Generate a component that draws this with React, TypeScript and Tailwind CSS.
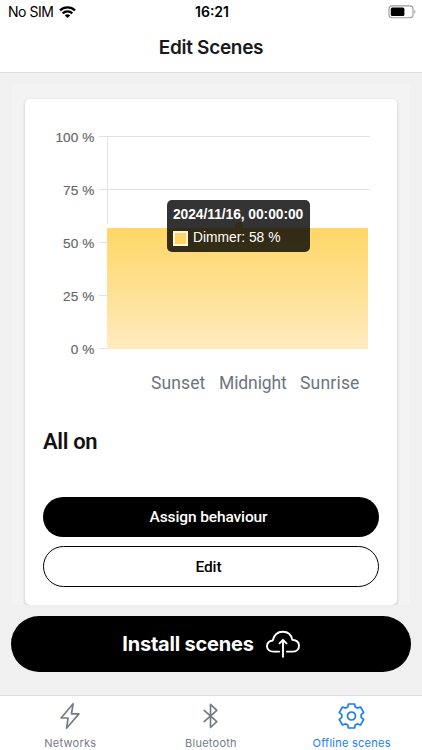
import type { ReactNode } from "react";

const gridLines = [
  { label: "100 %", y: 17, end: 345 },
  { label: "75 %", y: 70, end: 345 },
  { label: "50 %", y: 123, end: 343 },
  { label: "25 %", y: 176, end: 343 },
  { label: "0 %", y: 229, end: 343 },
];

const BoltIcon = () => (
  <svg width="28" height="28" viewBox="0 0 28 28" fill="none" stroke="currentColor" strokeWidth="1.7" strokeLinejoin="round">
    <path d="M17.1 1.8 5.1 16h7l-1.5 10.2L22.9 11.9h-7.4z" />
  </svg>
);

const BluetoothIcon = () => (
  <svg width="28" height="28" viewBox="0 0 28 28" fill="none" stroke="currentColor" strokeWidth="1.7" strokeLinecap="round" strokeLinejoin="round">
    <path d="m7.2 8.3 12.6 11.3-6.3 5.9V2.3l6.3 6L7.2 19.6" />
  </svg>
);

const GearIcon = () => (
  <svg width="28" height="28" viewBox="-13.500 -14 28 28" fill="none" stroke="currentColor" strokeWidth="1.7" strokeLinejoin="round">
    <path d="M-3.1-12H3.1L3.7-9.1 5.8-7.9 9-9 12.2-3.600 9.700-1.300V1.300L12.200 3.600 9 9 5.800 7.900 3.700 9.100 3.100 12H-3.100L-3.700 9.100-5.800 7.900-9 9-12.200 3.600-9.700 1.300V-1.300L-12.200-3.600-9-9-5.800-7.900-3.700-9.100z" />
    <circle r="4" />
  </svg>
);

const CloudUploadIcon = () => (
  <svg width="34" height="28" viewBox="0 0 34 28" fill="none" stroke="currentColor" strokeWidth="1.9" strokeLinecap="round" strokeLinejoin="round">
    <path d="M13.2 21.6H7.4C3.5 21.6 1 19.4 1 16.2c0-3.1 2.3-5.2 5.7-5.7C8 4.8 11.6 1.7 16.8 1.7c5 0 8.5 3 9.4 8 4.2.3 6.8 2.6 6.8 6 0 3.5-2.6 5.9-6.5 5.9h-5.7" />
    <path d="M17 26.7V10M13.5 13.3 17 9.8l3.5 3.5" />
  </svg>
);

const StatusBar = () => (
  <div className="flex h-6 items-center text-[14px] leading-none text-black">
    <div className="flex flex-1 items-center gap-[5px] pl-2">
      <span className="tracking-[-0.45px]">No SIM</span>
      <svg width="17" height="12" viewBox="0 0 17 12" fill="none" stroke="#000" strokeWidth="2.3">
        <path d="M1 4.4C5 .4 12 .4 16 4.4" />
        <path d="M3.7 7.4c2.6-2.6 7-2.6 9.6 0" />
        <path d="M8.5 12 5.8 9.4c1.4-1.4 4-1.4 5.4 0z" fill="#000" stroke="none" />
      </svg>
    </div>
    <span className="font-semibold">16:21</span>
    <div className="flex flex-1 justify-end pr-[6px]">
      <svg width="28" height="14" viewBox="0 0 28 14">
        <rect x="1" y=".9" width="24" height="11.8" rx="3" fill="none" stroke="#9b9b9b" strokeWidth="1.1" />
        <rect x="2.8" y="2.6" width="13.6" height="8.4" rx="1.6" fill="#000" />
        <path d="M26.3 4.8c1.5.6 1.5 3.4 0 4z" fill="#9b9b9b" />
      </svg>
    </div>
  </div>
);

const DimmerChart = () => (
  <div className="relative h-[240px]">
    <svg width="372" height="240" viewBox="0 0 372 240">
      <defs>
        <linearGradient id="dimmer" x1="0" x2="0" y1="0" y2="1">
          <stop offset="0" stopColor="#ffd666" />
          <stop offset="1" stopColor="#ffebbf" />
        </linearGradient>
      </defs>
      {gridLines.map((line) => (
        <g key={line.label}>
          <path d={`M74 ${line.y - 0.5}H${line.end}`} stroke="#e2e2e2" />
          <text
            x="69.5"
            y={line.y + 4.5}
            textAnchor="end"
            fontSize="13.6"
            fontFamily="Liberation Sans, sans-serif"
            fill="#666"
            stroke="#666"
            strokeWidth=".15"
            letterSpacing=".1"
          >
            {line.label}
          </text>
        </g>
      ))}
      <path d="M82.5 17v87" stroke="#e2e2e2" />
      <rect x="82" y="108" width="261" height="121" fill="url(#dimmer)" />
      <circle cx="214" cy="106" r="4" fill="#ffd666" />
    </svg>
    <div className="absolute left-[142px] top-[80px] flex h-[52px] w-[143px] flex-col gap-[7px] rounded-[5px] bg-black/80 pt-[7px] pl-[6px] font-['Liberation_Sans',sans-serif] text-[13.8px] leading-4 whitespace-nowrap text-white">
      <div className="font-bold tracking-[-0.05px]">2024/11/16, 00:00:00</div>
      <div className="flex items-center gap-[5px]">
        <span className="size-[15px] border-2 border-[#fff7df] bg-[#ffd666]" />
        Dimmer: 58 %
      </div>
    </div>
  </div>
);

type TabProps = {
  icon: ReactNode;
  label: string;
  active?: boolean;
};

const Tab = ({ icon, label, active }: TabProps) => (
  <button
    type="button"
    className={`flex w-1/3 flex-col items-center gap-[5px] pt-[6px] text-[11px] leading-4 tracking-[0.25px] ${
      active ? "text-[#1680f5]" : "text-[#747c86]"
    }`}
  >
    {icon}
    <span>{label}</span>
  </button>
);

const App = () => {
  return (
    <div className="flex h-[750px] w-[422px] flex-col overflow-hidden bg-[#f0f0f0] font-['Inter',sans-serif]">
      <header className="h-[73px] shrink-0 border-b border-[#dedede] bg-white">
        <StatusBar />
        <h1 className="mt-[9px] text-center text-[19px] leading-[30px] font-semibold tracking-[-0.3px] text-[#17191c]">
          Edit Scenes
        </h1>
      </header>

      <main className="mx-3 mt-[11px] h-[521px] shrink-0 overflow-hidden bg-[#f3f3f3] px-[13px] pt-[15px]">
        <section className="h-[506px] rounded-[5px] bg-white pt-[21px] font-['Roboto',sans-serif] shadow-[0_1px_3px_rgba(0,0,0,0.22)]">
          <DimmerChart />
          <div className="mt-[11px] flex h-6 justify-end gap-[14px] pr-[37px] text-[17.5px] leading-6 text-[#6c757d]">
            <span className="w-[54px] tracking-[0.1px]">Sunset</span>
            <span className="w-[67px] tracking-[-0.1px]">Midnight</span>
            <span className="w-[60px] tracking-[0.2px]">Sunrise</span>
          </div>
          <h2 className="mt-[31px] ml-[18px] text-[22px] leading-8 font-semibold tracking-[-0.35px] text-[#111]">
            All on
          </h2>
          <div className="mx-[18px] mt-[39px] flex flex-col gap-[9px] text-[15.5px] font-medium tracking-[-0.12px]">
            <button type="button" className="h-[40px] rounded-full bg-black pt-[2px] pr-[5px] text-white">
              Assign behaviour
            </button>
            <button
              type="button"
              className="h-[41px] rounded-full border border-black pt-[2px] pr-[5px] text-black"
            >
              Edit
            </button>
          </div>
        </section>
      </main>

      <button
        type="button"
        className="mx-[11px] mt-[11px] flex h-14 shrink-0 items-center justify-center gap-3 rounded-full bg-black text-[20px] font-bold tracking-[-0.2px] text-white"
      >
        Install scenes
        <CloudUploadIcon />
      </button>

      <nav className="mt-[23px] flex flex-1 border-t border-[#dedede] bg-white">
        <Tab icon={<BoltIcon />} label="Networks" />
        <Tab icon={<BluetoothIcon />} label="Bluetooth" />
        <Tab icon={<GearIcon />} label="Offline scenes" active />
      </nav>
    </div>
  );
};

export default App;
